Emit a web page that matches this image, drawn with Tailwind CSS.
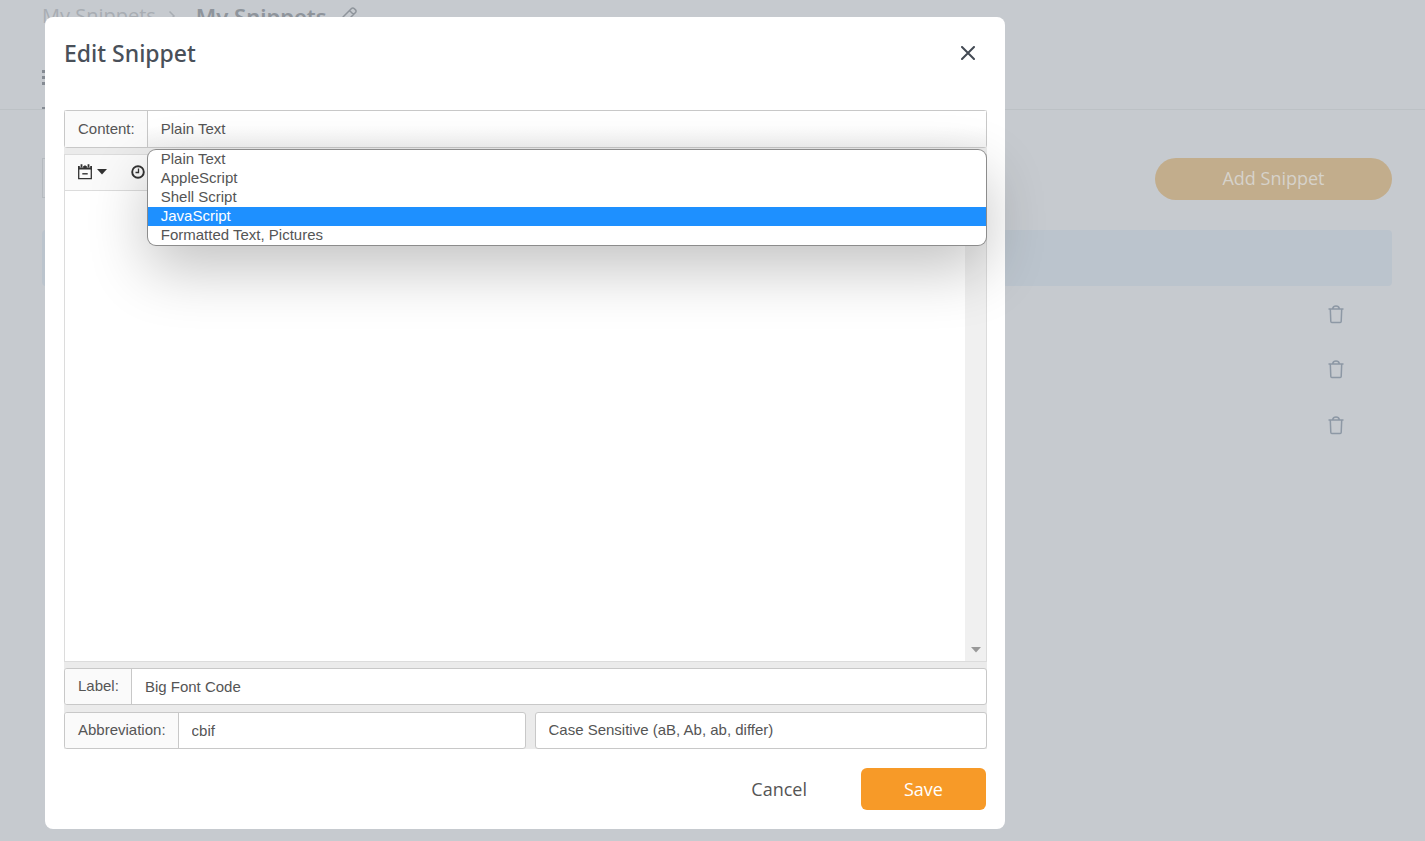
<!DOCTYPE html>
<html lang="en">
<head>
    <meta charset="UTF-8">
    <meta name="viewport" content="width=device-width, initial-scale=1.0">
    <title>My Snippets</title>
    <script src="https://cdn.jsdelivr.net/npm/@tailwindcss/browser@4"></script>
</head>
<body class="relative min-h-screen bg-[#c6cacf] font-['Open_Sans',sans-serif] text-[#555555]">
    <!-- Page behind the dialog -->
    <header class="h-[110px] border-b border-[#bcc1c5] pl-[42px]">
        <nav class="flex h-8 items-center text-[#a8adb3]">
            <a href="#" class="text-xl">My Snippets</a>
            <svg class="ml-3 h-3 w-2" viewBox="0 0 8 12" fill="none" stroke="currentColor" stroke-width="1.500"><path d="M1.500 1.500 6 6l-4.500 4.500"/></svg>
            <h1 class="ml-5 font-['Noto_Sans',sans-serif] text-[22px] font-semibold text-[#8e949b]">My Snippets</h1>
            <a href="#" aria-label="Rename" class="ml-3 text-[#8e949b]">
                <svg class="h-5 w-5" viewBox="0 0 20 20" fill="none" stroke="currentColor" stroke-width="1.500" stroke-linejoin="round"><path d="M3 16l1-5 8.500-8.500a1.800 1.800 0 0 1 2.600 0l1.400 1.400a1.800 1.800 0 0 1 0 2.600L8 15l-5 1zM10.500 4.500l4 4"/></svg>
            </a>
        </nav>
        <div class="flex h-[77px] w-14 flex-col border-b-2 border-[#858b93] pt-[38px]">
            <svg class="h-4 w-4" viewBox="0 0 16 16" fill="#858b93"><path d="M0 0h3v3H0zM0 6h3v3H0zM0 12h3v3H0zM5 0h11v3H5zM5 6h11v3H5zM5 12h11v3H5z"/></svg>
        </div>
    </header>
    <main class="pt-12 pr-[33px] pl-[42px]">
        <div class="flex justify-between">
            <div class="h-10 w-60 border border-[#b5babf]"></div>
            <button class="h-[42px] w-[237px] rounded-full bg-[#c2ad8c] pb-[2px] text-lg text-[#d6d2ca]">Add Snippet</button>
        </div>
        <ul class="mt-[30px]">
            <li class="h-14 rounded bg-[#bbc4cd]"></li>
            <li class="flex h-[55px] items-center justify-end pr-12">
                <button aria-label="Delete"><svg class="h-5 w-4" viewBox="0 0 16 20" fill="none" stroke="#8d98a5" stroke-width="1.500"><path d="M.500 5h15M2.300 5l.500 12.500q.100 1 1 1h8.400q.900 0 1-1L13.700 5M4.700 4.500Q5.200 2 8 2t3.300 2.500"/></svg></button>
            </li>
            <li class="flex h-14 items-center justify-end pr-12">
                <button aria-label="Delete"><svg class="h-5 w-4" viewBox="0 0 16 20" fill="none" stroke="#8d98a5" stroke-width="1.500"><path d="M.500 5h15M2.300 5l.500 12.500q.100 1 1 1h8.400q.900 0 1-1L13.700 5M4.700 4.500Q5.200 2 8 2t3.300 2.500"/></svg></button>
            </li>
            <li class="flex h-14 items-center justify-end pr-12">
                <button aria-label="Delete"><svg class="h-5 w-4" viewBox="0 0 16 20" fill="none" stroke="#8d98a5" stroke-width="1.500"><path d="M.500 5h15M2.300 5l.500 12.500q.100 1 1 1h8.400q.900 0 1-1L13.700 5M4.700 4.500Q5.200 2 8 2t3.300 2.500"/></svg></button>
            </li>
        </ul>
    </main>

    <!-- Edit dialog -->
    <div role="dialog" aria-labelledby="dialogTitle" class="absolute top-[17px] left-[45px] w-full max-w-[960px] rounded-lg bg-white pt-4 pr-[18px] pb-[19px] pl-[19px]">
        <div class="flex h-10 items-center justify-between">
            <h2 id="dialogTitle" class="font-['Noto_Sans',sans-serif] text-[23px] font-medium text-[#495059]">Edit Snippet</h2>
            <button aria-label="Close" class="p-3">
                <svg class="h-[14px] w-[14px]" viewBox="0 0 14 14" fill="none" stroke="#434a54" stroke-width="2" stroke-linecap="round"><path d="M1 1l12 12M13 1L1 13"/></svg>
            </button>
        </div>

        <form class="mt-[37px]">
            <div class="bg-[#ebebeb] font-['Liberation_Sans',Arial,sans-serif] text-[15px]">
                <div class="relative flex h-[38px] rounded-[3px] border border-[#c8c8c8] bg-white">
                    <label for="content" class="flex items-center border-r border-[#c8c8c8] bg-[#fafafa] pr-3 pl-[13px]">Content:</label>
                    <div class="relative flex-1">
                        <select id="content" class="h-full w-full appearance-none bg-linear-to-b from-white from-40% to-[#f3f3f3] px-[13px]">
                            <option>Plain Text</option>
                            <option>AppleScript</option>
                            <option>Shell Script</option>
                            <option>JavaScript</option>
                            <option>Formatted Text, Pictures</option>
                        </select>
                        <ul class="absolute top-full right-0 left-0 z-10 mt-[3px] overflow-hidden rounded-lg bg-white leading-[17px] shadow-[0_0_0_1px_#8c8c8c,0_24px_60px_rgba(0,0,0,0.24)]">
                            <li class="h-[19px] px-[13px]">Plain Text</li>
                            <li class="h-[19px] px-[13px]">AppleScript</li>
                            <li class="h-[19px] px-[13px]">Shell Script</li>
                            <li class="h-[19px] bg-[#1e90ff] px-[13px] text-white">JavaScript</li>
                            <li class="h-[19px] px-[13px]">Formatted Text, Pictures</li>
                        </ul>
                    </div>
                </div>

                <div class="mt-[6px] border border-[#dcdcdc] bg-white">
                    <div class="flex h-9 items-center gap-6 border-b border-[#dcdcdc] bg-[#fafafa] px-3 pb-px text-[#333333]">
                        <button type="button" aria-label="Insert date" class="flex items-center gap-1">
                            <svg class="h-4 w-4" viewBox="0 0 16 16" fill="none" stroke="currentColor"><path stroke-width="1.300" d="M1.700 4.500v10.200h12.600V4.500"/><path fill="currentColor" stroke="none" d="M1 2h14v3.500H1z"/><path stroke="#fafafa" stroke-width="3.400" d="M4.500 0v3.500M11.500 0v3.500"/><path stroke-width="1.800" d="M4.500.3v3.200M8 1.500v2M11.500.3v3.200"/><path stroke-width="1.400" d="M5.300 9.800h5.400"/></svg>
                            <svg class="h-[6px] w-[10px]" viewBox="0 0 10 6" fill="currentColor"><path d="M0 0h10L5 5.500z"/></svg>
                        </button>
                        <button type="button" aria-label="Insert time">
                            <svg class="h-[14px] w-[14px]" viewBox="0 0 14 14" fill="none" stroke="currentColor"><circle cx="7" cy="7" r="5.800" stroke-width="1.900"/><path stroke-width="1.300" d="M7.500 3.500v4H4.500"/></svg>
                        </button>
                    </div>
                    <div class="flex h-[470px]">
                        <textarea aria-label="Snippet content" class="flex-1 resize-none"></textarea>
                        <div class="flex w-[21px] items-end justify-center bg-[#f0f0f0] pb-2">
                            <svg class="h-[6px] w-[10px]" viewBox="0 0 10 6" fill="#999999"><path d="M0 0h10L5 5.500z"/></svg>
                        </div>
                    </div>
                </div>

                <div class="mt-[6px] flex h-[37px] overflow-hidden rounded-[3px] border border-[#c8c8c8] bg-white">
                    <label for="label" class="flex items-center border-r border-[#c8c8c8] bg-[#fafafa] pr-3 pl-[13px]">Label:</label>
                    <input id="label" type="text" value="Big Font Code" class="min-w-0 flex-1 px-[13px] pt-px">
                </div>

                <div class="mt-[7px] flex h-[37px] gap-[9px]">
                    <div class="flex w-1/2 overflow-hidden rounded-[3px] border border-[#c8c8c8] bg-white">
                        <label for="abbreviation" class="flex items-center border-r border-[#c8c8c8] bg-[#fafafa] pr-3 pl-[13px]">Abbreviation:</label>
                        <input id="abbreviation" type="text" value="cbif" class="min-w-0 flex-1 px-[13px] pt-px">
                    </div>
                    <select aria-label="Case sensitivity" class="flex-1 appearance-none rounded-[3px] border border-[#c8c8c8] bg-white px-[13px]">
                        <option>Case Sensitive (aB, Ab, ab, differ)</option>
                    </select>
                </div>
            </div>

            <div class="mt-[19px] flex h-[42px] justify-end gap-3 pr-px text-lg">
                <button type="button" class="px-[42px]">Cancel</button>
                <button type="button" class="w-[125px] rounded-md bg-[#f79a28] text-white">Save</button>
            </div>
        </form>
    </div>
</body>
</html>
